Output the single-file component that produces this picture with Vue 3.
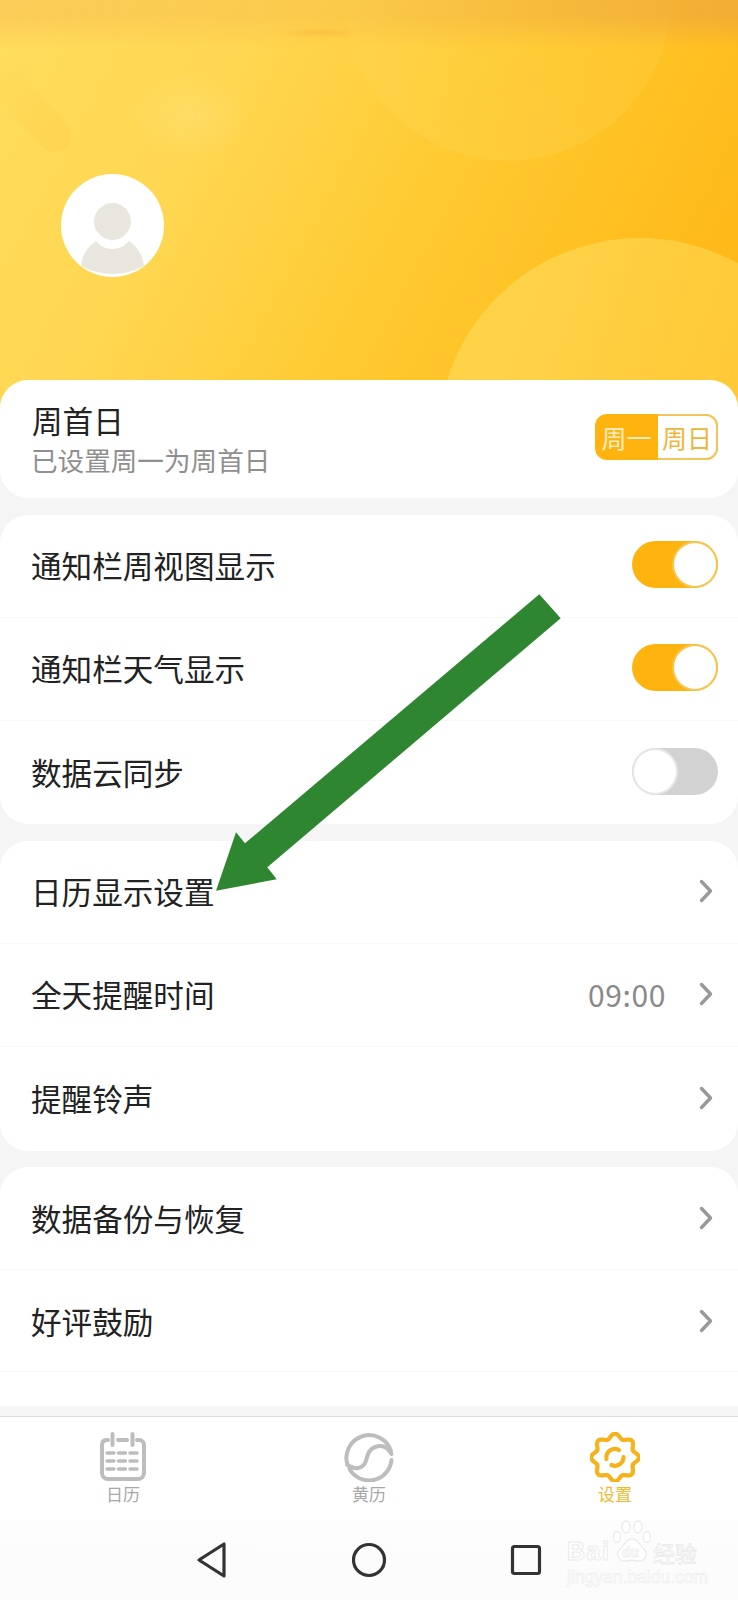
<script setup>
const gearPoints = []
for (let i = 0; i < 240; i++) {
  const t = (i / 240) * Math.PI * 2
  const r = 21.5 + 2.3 * Math.cos(8 * t)
  gearPoints.push(`${(614.5 + r * Math.sin(t)).toFixed(2)} ${(1458.5 - r * Math.cos(t)).toFixed(2)}`)
}
const gearPath = 'M' + gearPoints.join('L') + 'Z'

const toggleRows = [
  { label: '通知栏周视图显示', on: true },
  { label: '通知栏天气显示', on: true },
  { label: '数据云同步', on: false }
]
const linkRows = [
  { label: '日历显示设置' },
  { label: '全天提醒时间', value: '09:00' },
  { label: '提醒铃声' }
]
const lowerRows = ['数据备份与恢复', '好评鼓励']
const gridX = [107, 118.5, 130]
const gridY = [1454, 1462, 1470]
</script>

<template>
  <div class="page">
    <div class="content">
      <header class="hero">
        <div class="streak"></div>
        <div class="glow"></div>
        <div class="blob blob-top"></div>
        <div class="blob blob-bottom"></div>
        <div class="noise"></div>
        <div class="avatar">
          <svg viewBox="0 0 103 103" width="103" height="103">
            <circle cx="51.5" cy="47.5" r="18.5" fill="#e9e6de" />
            <path d="M20 92C21 82 26 73 35 67C40 73 46 75 51.5 75C57 75 63 73 68 67C77 73 82 82 83 92Q52 108 20 92Z" fill="#e9e6de" />
          </svg>
        </div>
      </header>

      <div class="cards">
        <section class="card first-day">
          <div class="titles">
            <div class="label">周首日</div>
            <div class="sub">已设置周一为周首日</div>
          </div>
          <div class="segment">
            <span class="seg seg-on">周一</span>
            <span class="seg seg-off">周日</span>
          </div>
        </section>

        <section class="card">
          <div v-for="row in toggleRows" :key="row.label" class="row">
            <span class="label">{{ row.label }}</span>
            <span class="switch" :class="{ on: row.on }"><i class="knob"></i></span>
          </div>
        </section>

        <section class="card">
          <div v-for="row in linkRows" :key="row.label" class="row">
            <span class="label">{{ row.label }}</span>
            <span class="right">
              <span v-if="row.value" class="value">{{ row.value }}</span>
              <svg class="chev" viewBox="0 0 14 24" width="14" height="24"><path d="M2.5 2.5L11.5 12L2.5 21.5" /></svg>
            </span>
          </div>
        </section>

        <section class="card last">
          <div v-for="label in lowerRows" :key="label" class="row">
            <span class="label">{{ label }}</span>
            <span class="right">
              <svg class="chev" viewBox="0 0 14 24" width="14" height="24"><path d="M2.5 2.5L11.5 12L2.5 21.5" /></svg>
            </span>
          </div>
        </section>
      </div>
    </div>

    <nav class="tabs">
      <div class="tab">
        <svg class="tab-icon" viewBox="98 1433 50 50" width="50" height="50">
          <g fill="none" stroke="#bdbdbd" stroke-width="4" stroke-linecap="round">
            <path d="M108 1441H106A5 5 0 0 0 102 1446V1474A6 6 0 0 0 108 1480H138A6 6 0 0 0 144 1474V1446A5 5 0 0 0 139 1441H137" />
            <path d="M112.5 1435V1446M132.5 1435V1446M118 1441H127" />
          </g>
          <g stroke="#bdbdbd" stroke-width="3.4" stroke-linecap="round">
            <template v-for="y in gridY" :key="y">
              <line v-for="x in gridX" :key="x" :x1="x" :y1="y" :x2="x + 7" :y2="y" />
            </template>
          </g>
        </svg>
        <span class="tab-label">日历</span>
      </div>
      <div class="tab">
        <svg class="tab-icon" viewBox="343.5 1433 50 50" width="50" height="50">
          <g fill="none" stroke="#bdbdbd" stroke-width="4" stroke-linecap="round">
            <path d="M390.5 1452A22.5 22.5 0 1 0 347 1466" />
            <path d="M347 1466C356 1472 364 1469 366 1460C368 1450 374 1447 380 1447C384 1447 388 1450 391 1455" />
            <path d="M391 1461A22.5 22.5 0 0 1 349 1470" />
          </g>
        </svg>
        <span class="tab-label">黄历</span>
      </div>
      <div class="tab active">
        <svg class="tab-icon" viewBox="589.5 1433 50 50" width="50" height="50">
          <g fill="none" stroke="#f6b21b" stroke-width="4.2" stroke-linecap="round">
            <path :d="gearPath" />
            <path d="M606 1460A8.5 8.5 0 0 1 618.5 1451" />
            <path d="M623 1458A8.5 8.5 0 0 1 611 1466" />
          </g>
        </svg>
        <span class="tab-label">设置</span>
      </div>
    </nav>

    <div class="system">
      <svg class="sys-icon" viewBox="0 0 34 38" width="34" height="38"><path d="M29 3V35L4 19Z" /></svg>
      <svg class="sys-icon" viewBox="0 0 38 38" width="38" height="38"><circle cx="19" cy="19" r="15.5" /></svg>
      <svg class="sys-icon" viewBox="0 0 34 34" width="34" height="34"><rect x="3.5" y="3.5" width="27" height="27" rx="2" /></svg>
    </div>

    <div class="watermark">
      <div class="wm-top">
        <span class="wm-bai">Bai</span>
        <span class="wm-paw">
          <svg viewBox="0 0 40 44" width="40" height="44" fill="#fff" stroke="#ebebeb" stroke-width="1.3">
            <ellipse cx="5" cy="17" rx="3.6" ry="5.5" />
            <ellipse cx="14" cy="7" rx="4" ry="6" />
            <ellipse cx="26" cy="7" rx="4" ry="6" />
            <ellipse cx="35" cy="17" rx="3.6" ry="5.5" />
            <path d="M20 19C14 19 13 25 8 29C3 34 7 42 14 41C18 40 22 40 26 41C33 42 37 34 32 29C27 25 26 19 20 19Z" />
          </svg>
          <span class="wm-du">du</span>
        </span>
        <span class="wm-cn">经验</span>
      </div>
      <div class="wm-url">jingyan.baidu.com</div>
    </div>

    <svg class="arrow" viewBox="0 0 738 1600" width="738" height="1600">
      <polygon points="539.3,594.3 560.7,618.3 267.3,867.3 276.7,879.3 216,890.7 236,832.3 245,843.3" fill="#2e8631" />
    </svg>
  </div>
</template>

<style scoped>
.page {
  position: relative;
  width: 738px;
  height: 1600px;
  overflow: hidden;
  display: flex;
  flex-direction: column;
  background: #f5f5f5;
  font-family: "Noto Sans CJK SC", "Noto Sans", sans-serif;
  color: #222;
}
.content {
  height: 1416px;
  overflow: hidden;
  flex: none;
}
.hero {
  position: relative;
  height: 410px;
  overflow: hidden;
  background: linear-gradient(118deg, #ffdd5e 0%, #ffd650 30%, #ffc92f 58%, #ffb412 100%);
}
.streak {
  position: absolute;
  left: -30px;
  top: 88px;
  width: 115px;
  height: 34px;
  border-radius: 17px;
  transform: rotate(48deg);
  background: linear-gradient(90deg, rgba(250, 190, 50, 0), rgba(250, 190, 50, 0.2));
}
.glow {
  position: absolute;
  left: 130px;
  top: 70px;
  width: 120px;
  height: 90px;
  border-radius: 50%;
  background: radial-gradient(closest-side, rgba(255, 226, 125, 0.45), rgba(255, 226, 125, 0));
}
.blob {
  position: absolute;
  border-radius: 50%;
}
.blob-top {
  left: 345px;
  top: -165px;
  width: 326px;
  height: 326px;
  background: linear-gradient(0deg, rgba(255, 222, 105, 0.2), rgba(255, 222, 105, 0.05) 70%);
}
.blob-bottom {
  left: 438px;
  top: 238px;
  width: 404px;
  height: 404px;
  background: linear-gradient(110deg, #ffd247 20%, #ffca38 60%, #ffbe22 85%);
}
.noise {
  position: absolute;
  left: 0;
  right: 0;
  top: 0;
  height: 48px;
  background:
    radial-gradient(ellipse 40px 5px at 320px 33px, rgba(246, 150, 50, 0.6), rgba(246, 150, 50, 0)),
    linear-gradient(90deg, rgba(240, 170, 75, 0.3), rgba(240, 170, 75, 0.22) 45%, rgba(230, 155, 70, 0.5) 100%);
  -webkit-mask-image: linear-gradient(180deg, #000 35%, transparent);
  mask-image: linear-gradient(180deg, #000 35%, transparent);
}
.avatar {
  position: absolute;
  left: 61px;
  top: 174px;
  width: 103px;
  height: 103px;
  border-radius: 50%;
  background: #fff;
  overflow: hidden;
}
.avatar svg {
  display: block;
}
.cards {
  position: relative;
  margin-top: -30px;
  display: flex;
  flex-direction: column;
  gap: 16.5px;
}
.card {
  background: #fff;
  border-radius: 28px;
}
.first-day {
  height: 118px;
  display: flex;
  align-items: center;
  justify-content: space-between;
  padding: 0 20px 0 32px;
}
.last {
  height: 239px;
  border-radius: 28px 28px 0 0;
}
.titles {
  display: flex;
  flex-direction: column;
  margin-top: -2px;
}
.label {
  font-size: 30.6px;
  line-height: 44px;
  color: #222;
}
.sub {
  margin-left: -1px;
  font-size: 26.6px;
  line-height: 36px;
  color: #8f8f8f;
}
.segment {
  width: 123px;
  height: 46px;
  display: flex;
  border-radius: 12px;
  overflow: hidden;
  background: #ffb30f;
  margin-top: -4px;
}
.seg {
  display: flex;
  align-items: center;
  justify-content: center;
  font-size: 25px;
  line-height: 1;
  box-sizing: border-box;
}
.seg-on {
  width: 63px;
  color: #ffedc4;
}
.seg-off {
  flex: 1;
  background: #fff;
  color: #eeb53c;
  border: 2px solid #f4c45c;
  border-left: none;
  border-radius: 0 12px 12px 0;
}
.row {
  height: 103.3px;
  box-sizing: border-box;
  display: flex;
  align-items: center;
  justify-content: space-between;
  padding: 0 20px 2px 31px;
  border-bottom: 1px solid #f8f8f8;
}
.last .row {
  height: 102.5px;
  padding-bottom: 0;
}
.card:not(.last) .row:last-child {
  border-bottom: none;
}
.switch {
  width: 86px;
  height: 47px;
  box-sizing: border-box;
  border-radius: 24px;
  background: #d2d2d2;
  display: flex;
  justify-content: flex-start;
}
.switch.on {
  background: #ffb30f;
  justify-content: flex-end;
}
.knob {
  display: block;
  width: 46px;
  height: 47px;
  box-sizing: border-box;
  border-radius: 50%;
  background: #fff;
  border: 2px solid #e6e6e6;
}
.switch.on .knob {
  border-color: #f9c44e;
}
.right {
  display: flex;
  align-items: center;
  gap: 33px;
  padding-right: 5px;
}
.value {
  font-size: 30px;
  line-height: 44px;
  letter-spacing: 0.6px;
  color: #8a8a8a;
}
.chev {
  display: block;
}
.chev path {
  fill: none;
  stroke: #999;
  stroke-width: 3.4;
  stroke-linecap: round;
  stroke-linejoin: round;
}
.tabs {
  flex: none;
  height: 104px;
  box-sizing: border-box;
  border-top: 1px solid #dedede;
  background: #fff;
  display: grid;
  grid-template-columns: repeat(3, 1fr);
}
.tab {
  display: flex;
  flex-direction: column;
  align-items: center;
  padding-top: 15px;
}
.tab-icon {
  display: block;
}
.tab-label {
  font-size: 17px;
  line-height: 22px;
  margin-top: 1px;
  color: #a8a8a8;
}
.active .tab-label {
  color: #efb92f;
}
.system {
  flex: 1;
  display: flex;
  align-items: center;
  gap: 121px;
  background: linear-gradient(180deg, #fdfdfd, #fbfbfb);
  padding-left: 195px;
  box-sizing: border-box;
}
.sys-icon {
  display: block;
  fill: none;
  stroke: #333;
  stroke-width: 3.2;
  stroke-linejoin: round;
}
.watermark {
  position: absolute;
  left: 567px;
  top: 1520px;
  width: 132px;
  color: #fff;
}
.wm-top {
  display: flex;
  align-items: flex-end;
  height: 44px;
}
.wm-bai {
  width: 45px;
  font-family: "Liberation Sans", sans-serif;
  font-weight: 700;
  font-size: 25px;
  line-height: 26px;
  letter-spacing: 1.5px;
  color: #fff;
  -webkit-text-stroke: 1px #ebebeb;
}
.wm-paw {
  position: relative;
  width: 40px;
  height: 44px;
}
.wm-paw svg {
  display: block;
}
.wm-du {
  position: absolute;
  left: 10px;
  bottom: 4px;
  font-family: "Liberation Sans", sans-serif;
  font-size: 14px;
  line-height: 16px;
  font-weight: 700;
  color: #fff;
  -webkit-text-stroke: 0.7px #e8e8e8;
}
.wm-cn {
  font-size: 22px;
  line-height: 24px;
  margin-left: 1px;
  white-space: nowrap;
  color: #fff;
  -webkit-text-stroke: 0.8px #e9e9e9;
}
.wm-url {
  margin-top: 3px;
  font-family: "Liberation Sans", sans-serif;
  font-size: 17.5px;
  line-height: 20px;
  white-space: nowrap;
  color: #fff;
  -webkit-text-stroke: 0.6px #ececec;
}
.arrow {
  position: absolute;
  left: 0;
  top: 0;
  pointer-events: none;
}
</style>
